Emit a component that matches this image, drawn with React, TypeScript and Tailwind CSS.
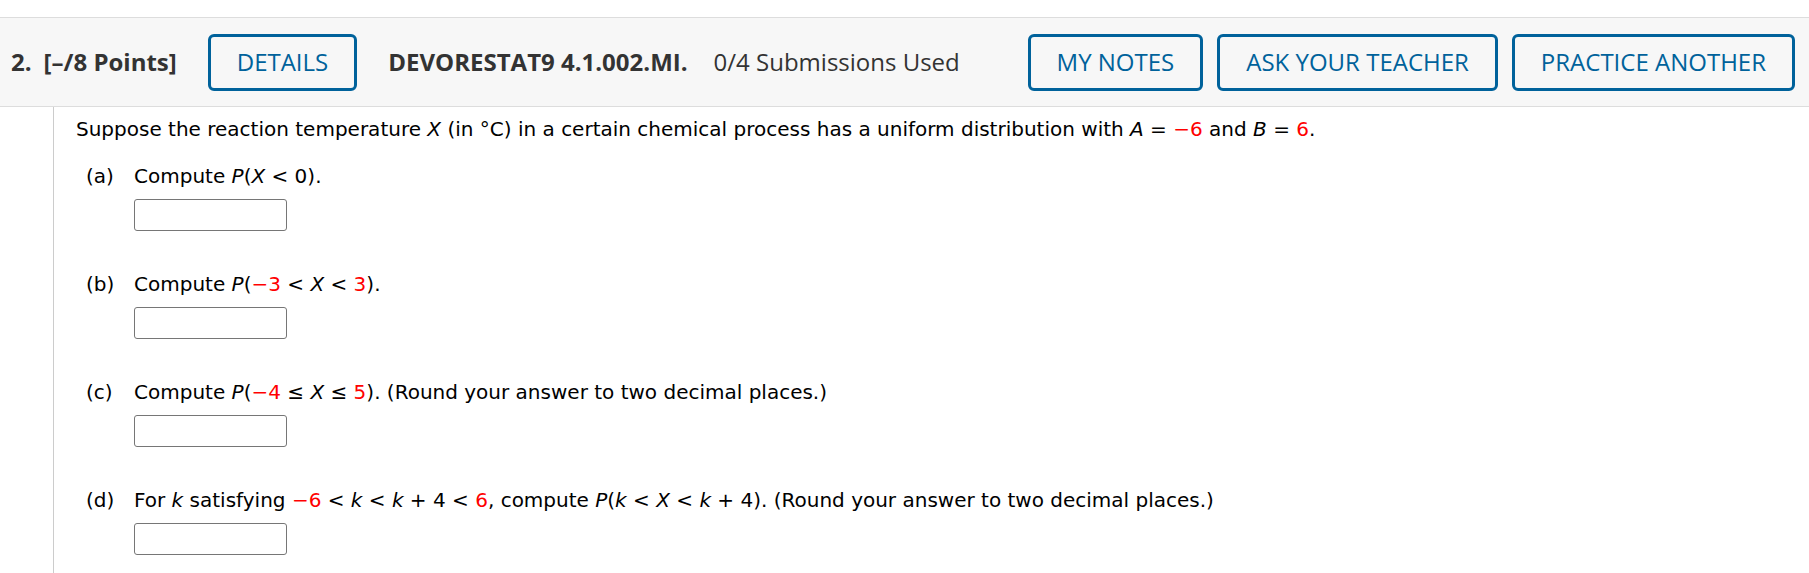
const headFont = { fontFamily: '"Open Sans", "Noto Sans", sans-serif' };
const bodyFont = { fontFamily: '"DejaVu Sans", Verdana, sans-serif' };

function HeadButton({ label }: { label: string }) {
  return (
    <button className="h-[57px] px-[26px] border-[3px] border-[#00629b] rounded-[6px] text-[#00629b] text-[24px] leading-none uppercase bg-transparent">
      {label}
    </button>
  );
}

const R = ({ children }: { children: React.ReactNode }) => <span className="text-[#f00]">{children}</span>;
const I = ({ children }: { children: React.ReactNode }) => <i>{children}</i>;

function AnswerBox() {
  return <div className="mt-[11px] ml-[48px] w-[153px] h-[32px] border border-[#767676] rounded-[3px] bg-white" />;
}

const parts = [
  {
    key: "a",
    text: (
      <>
        Compute <I>P</I>(<I>X</I> &lt; 0).
      </>
    ),
  },
  {
    key: "b",
    text: (
      <>
        Compute <I>P</I>(<R>−3</R> &lt; <I>X</I> &lt; <R>3</R>).
      </>
    ),
  },
  {
    key: "c",
    text: (
      <>
        Compute <I>P</I>(<R>−4</R> ≤ <I>X</I> ≤ <R>5</R>). (Round your answer to two decimal places.)
      </>
    ),
  },
  {
    key: "d",
    text: (
      <>
        For <I>k</I> satisfying <R>−6</R> &lt; <I>k</I> &lt; <I>k</I> + 4 &lt; <R>6</R>, compute <I>P</I>(<I>k</I> &lt; <I>X</I> &lt;{" "}
        <I>k</I> + 4). (Round your answer to two decimal places.)
      </>
    ),
  },
];

export default function App() {
  return (
    <div className="w-[1809px] h-[573px] bg-white overflow-hidden">
      {/* Question header */}
      <div
        style={headFont}
        className="mt-[17px] h-[90px] flex items-center bg-[#f7f7f7] border-y border-[#dddddd] pl-[11px] pr-[14px] text-[#333333] text-[24px]"
      >
        <span className="font-bold">2.</span>
        <span className="ml-[12px] font-bold">[–/8 Points]</span>
        <div className="ml-[31px]">
          <HeadButton label="Details" />
        </div>
        <span className="ml-[31px] font-bold">DEVORESTAT9 4.1.002.MI.</span>
        <span className="ml-[26px]">0/4 Submissions Used</span>
        <div className="ml-auto flex gap-[14px]">
          <HeadButton label="My Notes" />
          <HeadButton label="Ask Your Teacher" />
          <HeadButton label="Practice Another" />
        </div>
      </div>

      {/* Question body */}
      <div className="flex h-full">
        <div className="w-[54px] shrink-0 border-r border-[#cccccc]" />
        <div style={bodyFont} className="pl-[22px] pt-[10px] text-[20px] leading-[24px] text-black">
          <p>
            Suppose the reaction temperature <I>X</I> (in °C) in a certain chemical process has a uniform distribution with{" "}
            <I>A</I> = <R>−6</R> and <I>B</I> = <R>6</R>.
          </p>
          <div className="mt-[23px] ml-[10px] flex flex-col gap-[41px]">
            {parts.map((p) => (
              <div key={p.key}>
                <div className="flex">
                  <span className="w-[48px] shrink-0">({p.key})</span>
                  <span>{p.text}</span>
                </div>
                <AnswerBox />
              </div>
            ))}
          </div>
        </div>
      </div>
    </div>
  );
}
